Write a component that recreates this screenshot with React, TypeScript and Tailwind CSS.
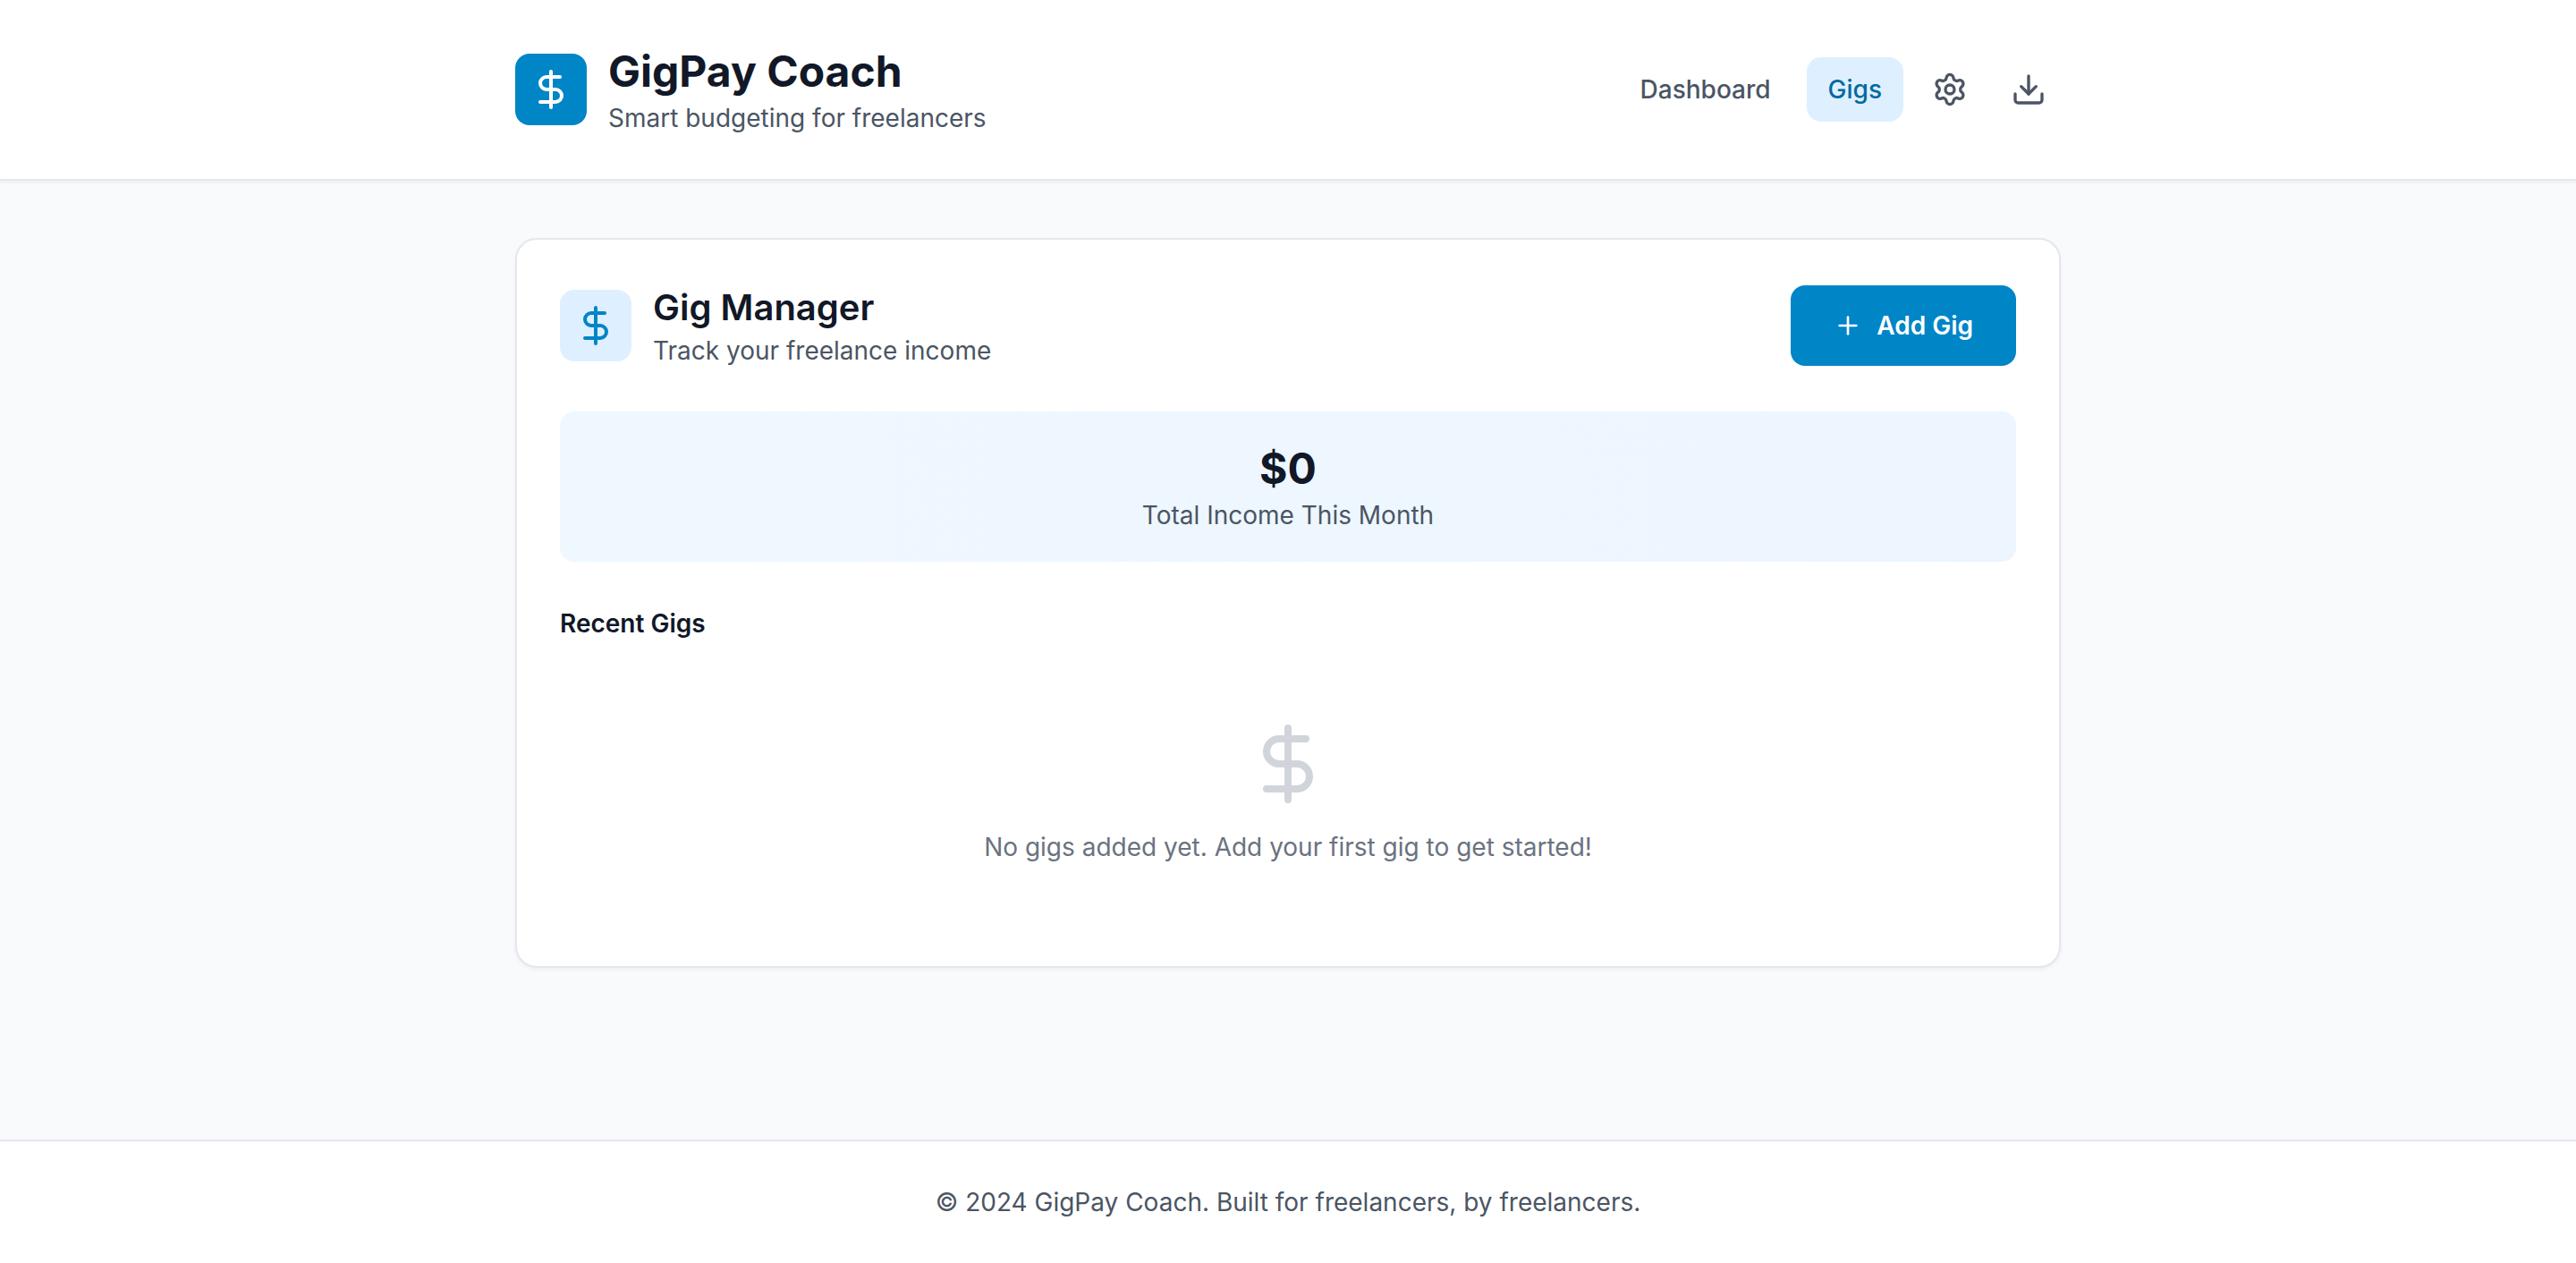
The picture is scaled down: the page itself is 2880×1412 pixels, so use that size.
import { DollarSign, Download, Plus, Settings } from "lucide-react"

const navLink = "rounded-2xl px-6 py-4 text-[28px]/10 font-medium"
const iconButton = "rounded-2xl p-4 text-[#4b5563]"

const Header = () => {
    return (
        <header className="border-b-2 border-[#e4e7ec] bg-white shadow-[0_2px_4px_rgba(0,0,0,0.05)]">
            <div className="mx-auto flex w-full max-w-[1792px] items-center justify-between px-8 py-12">
                <div className="flex items-center gap-6">
                    <div className="rounded-2xl bg-[#0085c7] p-4 text-white">
                        <DollarSign className="size-12" />
                    </div>
                    <div>
                        <h1 className="text-5xl/16 font-bold text-[#111827]">GigPay Coach</h1>
                        <p className="text-[28px]/10 text-[#4b5563]">Smart budgeting for freelancers</p>
                    </div>
                </div>
                <nav className="flex items-center gap-4">
                    <button type="button" className={`${navLink} text-[#4b5563]`}>Dashboard</button>
                    <button type="button" aria-current="page" className={`${navLink} bg-[#def0ff] text-[#0369a1]`}>Gigs</button>
                    <button type="button" aria-label="Settings" className={iconButton}>
                        <Settings className="size-10" />
                    </button>
                    <button type="button" aria-label="Export data" className={iconButton}>
                        <Download className="size-10" />
                    </button>
                </nav>
            </div>
        </header>
    )
}

const GigManager = () => {
    return (
        <section className="rounded-3xl border-2 border-[#e4e7ec] bg-white p-12 shadow-[0_2px_4px_rgba(0,0,0,0.05)]">
            <div className="mb-12 flex items-center justify-between">
                <div className="flex items-center gap-6">
                    <div className="rounded-2xl bg-[#def0ff] p-4 text-[#0085c7]">
                        <DollarSign className="size-12" />
                    </div>
                    <div>
                        <h2 className="text-[40px]/14 font-semibold text-[#111827]">Gig Manager</h2>
                        <p className="text-[28px]/10 text-[#4b5563]">Track your freelance income</p>
                    </div>
                </div>
                <button type="button" className="flex items-center gap-4 rounded-2xl bg-[#0085c7] px-12 py-6 text-[28px]/[42px] font-semibold text-white">
                    <Plus className="size-8" />
                    Add Gig
                </button>
            </div>

            <div className="mb-12 rounded-2xl bg-linear-to-r from-[#eff8ff] to-[#edf5ff] p-8 text-center">
                <div className="text-5xl/16 font-bold text-[#111827]">$0</div>
                <div className="text-[28px]/10 text-[#4b5563]">Total Income This Month</div>
            </div>

            <h3 className="mb-6 text-[28px]/[42px] font-semibold text-[#111827]">Recent Gigs</h3>
            <div className="py-16 text-center text-[#6b7280]">
                <DollarSign className="mx-auto mb-6 size-24 text-[#d1d5db]" />
                <p className="text-[28px]/[42px]">No gigs added yet. Add your first gig to get started!</p>
            </div>
        </section>
    )
}

const App = () => {
    return (
        <div className="min-h-screen bg-[#f9fafc] font-[Inter,sans-serif]">
            <Header />
            <main className="mx-auto w-full max-w-[1792px] px-8 py-16">
                <GigManager />
            </main>
            <footer className="mt-32 border-t-2 border-[#e4e7ec] bg-white px-8 py-12 text-center">
                <p className="text-[28px]/10 text-[#4b5563]">© 2024 GigPay Coach. Built for freelancers, by freelancers.</p>
            </footer>
        </div>
    )
}

export default App
